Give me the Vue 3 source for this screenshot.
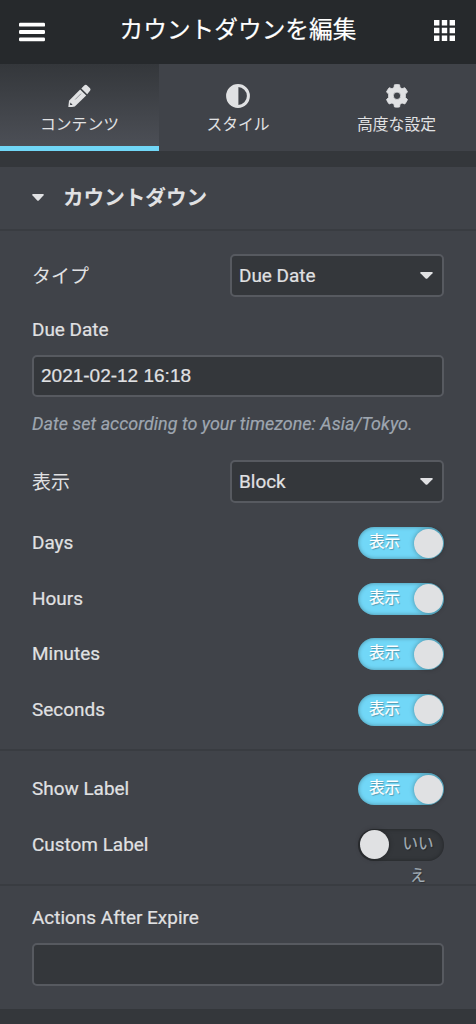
<script setup>
const units = ['Days', 'Hours', 'Minutes', 'Seconds']
</script>

<template>
  <div class="panel">
    <header class="top">
      <svg class="burger" width="26" height="20" viewBox="0 0 26 20" fill="#fff">
        <rect y="0.8" width="26" height="3.8" rx="1.2" />
        <rect y="8.1" width="26" height="3.8" rx="1.2" />
        <rect y="15.4" width="26" height="3.8" rx="1.2" />
      </svg>
      <h1>カウントダウンを編集</h1>
      <svg class="apps" width="21" height="21" viewBox="0 0 21 21" fill="#fff">
        <path d="M0 0h5.4v5.4H0zM7.8 0h5.4v5.4H7.8zM15.6 0H21v5.4h-5.4zM0 7.8h5.4v5.4H0zM7.8 7.8h5.4v5.4H7.8zM15.6 7.8H21v5.4h-5.4zM0 15.6h5.4V21H0zM7.8 15.6h5.4V21H7.8zM15.6 15.6H21V21h-5.4z" />
      </svg>
    </header>

    <nav class="tabs">
      <div class="tab active">
        <svg class="pencil" width="24" height="24" viewBox="0 0 24 24" fill="#e0e1e3">
          <path d="M1.3 23.1 2 16.7 13.1 5.4 19.2 11.5 7.8 22.6Q4.5 23.2 1.3 23.1Z" />
          <path d="M14.3 4.5 17.2 1.6Q18.8.1 20.4 1.7L22.8 4.1Q24.2 5.6 22.8 7.1L20.2 10.3Z" />
          <path d="M3.4 18.6 3 21.1 5.6 20.9 4.9 19.9Z" fill="#404349" />
          <path d="M8.2 15.5 14 9.7" stroke="#404349" stroke-width=".7" opacity=".7" />
        </svg>
        <span>コンテンツ</span>
      </div>
      <div class="tab">
        <svg width="24" height="24" viewBox="0 0 24 24">
          <circle cx="12" cy="12" r="10.4" fill="none" stroke="#e0e1e3" stroke-width="3" />
          <path d="M12.4 1.5H12a10.5 10.5 0 0 0 0 21h.4z" fill="#e0e1e3" />
        </svg>
        <span>スタイル</span>
      </div>
      <div class="tab">
        <svg width="24" height="24" viewBox="0 0 24 24" fill="#e0e1e3">
          <path fill-rule="evenodd" stroke="#e0e1e3" stroke-width=".8" stroke-linejoin="round" d="M9.4 .8Q12 .2 14.6 .8L15 3.5 17 4.7 19.8 3.7Q21.6 5.7 22.5 8.1L20.4 10.1V13.5L22.5 15.5Q21.5 18 19.8 20L17 19 15 20.2 14.6 22.9Q12 23.4 9.4 22.9L9 20.2 7 19 4.2 20Q2.4 18 1.5 15.5L3.6 13.5V10.1L1.5 8.1Q2.4 5.7 4.2 3.7L7 4.7 9 3.5ZM12 8.1a3.7 3.7 0 1 0 0 7.4 3.7 3.7 0 0 0 0-7.4Z" />
        </svg>
        <span>高度な設定</span>
      </div>
    </nav>

    <section class="section">
      <h2>
        <svg width="12" height="7" viewBox="0 0 12 7" fill="#e0e1e3"><path d="M1 0h10q1.2.3.6 1.3L6.8 6.4q-.8.7-1.6 0L.4 1.3Q-.2.3 1 0z" /></svg>
        <span>カウントダウン</span>
      </h2>

      <div class="row type">
        <label class="ja">タイプ</label>
        <div class="select">
          Due Date
          <svg width="13" height="7" viewBox="0 0 12 7" preserveAspectRatio="none" fill="#e0e1e3"><path d="M1 0h10q1.2.3.6 1.3L6.8 6.4q-.8.7-1.6 0L.4 1.3Q-.2.3 1 0z" /></svg>
        </div>
      </div>

      <div class="stack due">
        <label>Due Date</label>
        <div class="input">2021-02-12 16:18</div>
        <p>Date set according to your timezone: Asia/Tokyo.</p>
      </div>

      <div class="row display">
        <label class="ja">表示</label>
        <div class="select">
          Block
          <svg width="13" height="7" viewBox="0 0 12 7" preserveAspectRatio="none" fill="#e0e1e3"><path d="M1 0h10q1.2.3.6 1.3L6.8 6.4q-.8.7-1.6 0L.4 1.3Q-.2.3 1 0z" /></svg>
        </div>
      </div>

      <div class="switches units">
        <div v-for="unit in units" :key="unit" class="row">
          <label>{{ unit }}</label>
          <div class="switch"><span>表示</span><i></i></div>
        </div>
      </div>

      <div class="switches labels">
        <div class="row">
          <label>Show Label</label>
          <div class="switch"><span>表示</span><i></i></div>
        </div>
        <div class="row">
          <label>Custom Label</label>
          <div class="switch off"><i></i><span>いいえ</span></div>
        </div>
      </div>

      <div class="stack actions">
        <label>Actions After Expire</label>
        <div class="input"></div>
      </div>
    </section>
  </div>
</template>

<style>
body {
  margin: 0;
  background: #34373b;
}
</style>

<style scoped>
.panel {
  width: 476px;
  height: 1024px;
  overflow: hidden;
  background: #34373b;
  color: #e0e1e3;
  font-family: Roboto, "Noto Sans CJK JP", sans-serif;
  font-size: 18.95px;
  -webkit-text-stroke: 0.2px currentColor;
}
.panel * {
  box-sizing: border-box;
}
svg {
  display: block;
  flex: none;
}
.top {
  display: flex;
  align-items: center;
  justify-content: space-between;
  height: 64px;
  padding: 0 21px 0 19px;
  background: #26292c;
}
h1 {
  margin: 0 3px 4px 0;
  color: #fff;
  font-size: 23.7px;
  font-weight: 400;
  line-height: 36px;
  white-space: nowrap;
}
.apps {
  margin-bottom: 3px;
}
.tabs {
  display: grid;
  grid-template-columns: 159px 158px 159px;
  height: 87px;
  background: #404349;
}
.tab {
  display: flex;
  flex-direction: column;
  align-items: center;
  padding-top: 20px;
  font-size: 15.8px;
  line-height: 24px;
  -webkit-text-stroke: 0;
}
.tab span {
  margin-top: 5px;
}
.pencil {
  margin-right: 2px;
}
.active {
  border-bottom: 5px solid #71d7f7;
  background: linear-gradient(#34373b, #4c4f56);
}
.section {
  height: 842px;
  margin-top: 16px;
  background: #404349;
}
h2 {
  display: flex;
  align-items: center;
  gap: 19px;
  height: 64px;
  margin: 0;
  padding: 0 32px 2px;
  border-bottom: 2px solid #393c41;
  font-size: 20.6px;
  font-weight: 700;
  -webkit-text-stroke: 0;
}
h2 span {
  margin-bottom: 3px;
}
.row {
  display: flex;
  align-items: center;
  justify-content: space-between;
  padding: 0 32px;
}
.type {
  margin-top: 23px;
}
.ja {
  margin-bottom: 2px;
  -webkit-text-stroke: 0;
}
.select {
  display: flex;
  align-items: center;
  justify-content: space-between;
  width: 214px;
  height: 43px;
  padding: 0 9px 0 7px;
  border: 2px solid #575a60;
  border-radius: 5px;
  background: #34373b;
}
.stack {
  padding: 0 32px;
}
.stack label {
  display: block;
  height: 24px;
  line-height: 24px;
}
.due {
  margin-top: 21px;
}
.input {
  height: 42px;
  margin-top: 13px;
  padding: 0 7px;
  border: 2px solid #575a60;
  border-radius: 5px;
  background: #34373b;
  font-family: "Liberation Sans", sans-serif;
  font-size: 19px;
  line-height: 37px;
}
p {
  margin: 16px 0 0;
  color: #9ea6b0;
  font-size: 17.98px;
  font-style: italic;
  line-height: 22px;
  white-space: nowrap;
}
.display {
  margin-top: 25px;
}
.switches {
  display: flex;
  flex-direction: column;
  gap: 23.6px;
  border-bottom: 2px solid #393c41;
}
.switches .row {
  height: 32px;
}
.switches label {
  margin-bottom: 1px;
}
.units {
  height: 248px;
  padding-top: 24px;
}
.labels {
  height: 135px;
  padding-top: 22px;
}
.switch {
  display: flex;
  align-items: center;
  justify-content: space-between;
  width: 86px;
  height: 32px;
  padding: 0 1px 0 11px;
  border-radius: 16px;
  background: #71d7f7;
  box-shadow: inset 0 0 4px rgba(0, 0, 0, 0.35);
  color: #fff;
  font-size: 15.5px;
  line-height: 32px;
  text-shadow: 1px 1px 1px rgba(0, 0, 0, 0.3);
}
.switch span {
  height: 34px;
}
.switch i {
  flex: none;
  width: 29px;
  height: 29px;
  border-radius: 50%;
  background: #e0e1e3;
  box-shadow: 0 0 5px rgba(0, 0, 0, 0.35);
}
.off {
  padding: 0 8px 0 2px;
  background: #34373b;
  color: #a4afb7;
}
.off span {
  width: 36px;
  text-align: center;
}
.actions {
  padding-top: 20px;
}
.actions .input {
  height: 43px;
  margin-top: 13px;
}
</style>
